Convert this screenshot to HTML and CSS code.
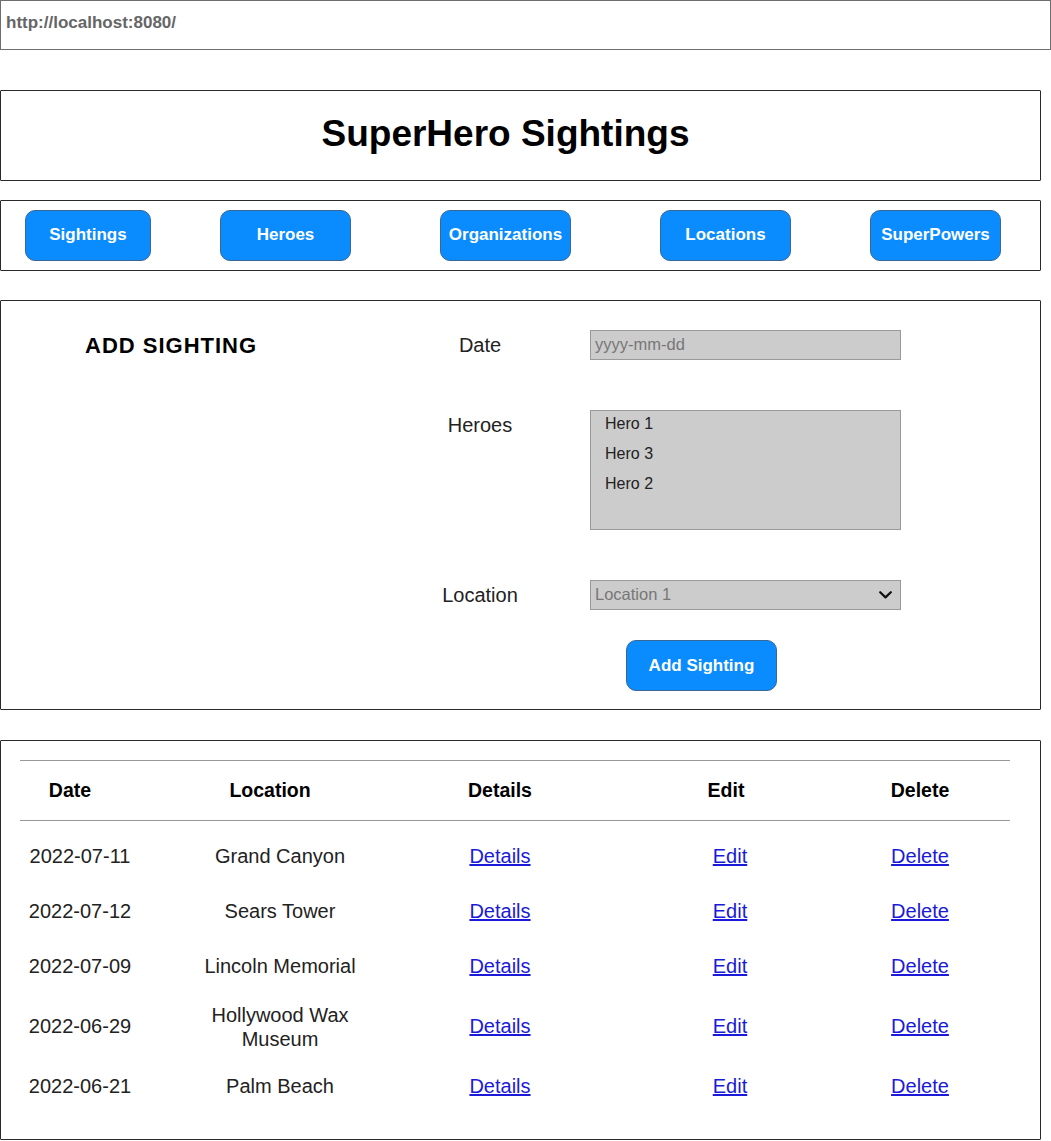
FILE: index.html
```html
<!DOCTYPE html>
<html lang="en">
<head>
<meta charset="utf-8">
<title>SuperHero Sightings</title>
<link rel="stylesheet" href="styles.css">
</head>
<body>
<div class="urlbar">http://localhost:8080/</div>

<header class="box header-box">
  <h1 class="title">SuperHero Sightings</h1>
</header>

<nav class="box nav-box">
  <a class="btn nav-btn nb-sightings">Sightings</a>
  <a class="btn nav-btn nb-heroes">Heroes</a>
  <a class="btn nav-btn nb-orgs">Organizations</a>
  <a class="btn nav-btn nb-locs">Locations</a>
  <a class="btn nav-btn nb-powers">SuperPowers</a>
</nav>

<section class="box add-box">
  <h2 class="add-title">ADD SIGHTING</h2>
  <div class="form-col">
    <div class="form-grid">
      <label class="field-label">Date</label>
      <input class="date-input" type="text" placeholder="yyyy-mm-dd">

      <label class="field-label label-top">Heroes</label>
      <ul class="hero-list">
        <li>Hero 1</li>
        <li>Hero 3</li>
        <li>Hero 2</li>
      </ul>

      <label class="field-label">Location</label>
      <div class="select-box">
        <span>Location 1</span>
        <svg class="chevron" width="13" height="8" viewBox="0 0 13 8"><path d="M1.2 1.2 L6.5 6.4 L11.8 1.2" fill="none" stroke="#111" stroke-width="2.2" stroke-linecap="round" stroke-linejoin="round"/></svg>
      </div>
    </div>
    <a class="btn add-btn">Add Sighting</a>
  </div>
</section>

<section class="box table-box">
  <div class="trow thead">
    <div class="c1 h1c">Date</div>
    <div class="c2 h2c">Location</div>
    <div class="c3">Details</div>
    <div class="c4 h4c">Edit</div>
    <div class="c5">Delete</div>
  </div>
  <div class="tbody">
    <div class="trow">
      <div class="c1">2022-07-11</div>
      <div class="c2"><span class="loc">Grand Canyon</span></div>
      <div class="c3"><a class="link">Details</a></div>
      <div class="c4"><a class="link">Edit</a></div>
      <div class="c5"><a class="link">Delete</a></div>
    </div>
    <div class="trow">
      <div class="c1">2022-07-12</div>
      <div class="c2"><span class="loc">Sears Tower</span></div>
      <div class="c3"><a class="link">Details</a></div>
      <div class="c4"><a class="link">Edit</a></div>
      <div class="c5"><a class="link">Delete</a></div>
    </div>
    <div class="trow">
      <div class="c1">2022-07-09</div>
      <div class="c2"><span class="loc">Lincoln Memorial</span></div>
      <div class="c3"><a class="link">Details</a></div>
      <div class="c4"><a class="link">Edit</a></div>
      <div class="c5"><a class="link">Delete</a></div>
    </div>
    <div class="trow">
      <div class="c1">2022-06-29</div>
      <div class="c2 c2-multi"><span class="loc">Hollywood Wax Museum</span></div>
      <div class="c3"><a class="link">Details</a></div>
      <div class="c4"><a class="link">Edit</a></div>
      <div class="c5"><a class="link">Delete</a></div>
    </div>
    <div class="trow">
      <div class="c1">2022-06-21</div>
      <div class="c2"><span class="loc">Palm Beach</span></div>
      <div class="c3"><a class="link">Details</a></div>
      <div class="c4"><a class="link">Edit</a></div>
      <div class="c5"><a class="link">Delete</a></div>
    </div>
  </div>
</section>
</body>
</html>
```

FILE: styles.css
```css
* { box-sizing: border-box; }

body {
  margin: 0;
  width: 1051px;
  font-family: "Liberation Sans", Arial, sans-serif;
  color: #222;
  background: #fff;
}

.urlbar {
  height: 50px;
  border: 1px solid #6e6e6e;
  padding: 0 0 4px 5px;
  display: flex;
  align-items: center;
  font-size: 17px;
  font-weight: bold;
  color: #666;
}

.box {
  width: 1041px;
  border: 1px solid #2a2a2a;
  border-radius: 1px;
}

/* header */
.header-box {
  margin-top: 40px;
  height: 91px;
  display: flex;
  align-items: center;
  justify-content: center;
  padding: 0 30px 3px 0;
}
.title {
  margin: 0;
  font-size: 37px;
  font-weight: bold;
  color: #000;
}

/* buttons */
.btn {
  display: flex;
  align-items: center;
  justify-content: center;
  height: 51px;
  background: #0a8cff;
  border: 1px solid #3a6896;
  border-radius: 10px;
  color: #fff;
  font-size: 17px;
  font-weight: bold;
  text-decoration: none;
}

.nav-box {
  margin-top: 19px;
  height: 71px;
  display: flex;
  align-items: center;
  padding: 0 0 1px 24px;
}
.nav-btn { width: 131px; }
.nb-sightings { width: 126px; }
.nb-heroes { margin-left: 69px; }
.nb-orgs { margin-left: 89px; }
.nb-locs { margin-left: 89px; }
.nb-powers { margin-left: 79px; }

/* add sighting form */
.add-box {
  margin-top: 29px;
  display: flex;
  padding: 29px 0 18px 0;
}
.add-title {
  width: 419px;
  margin: 0;
  padding-left: 84px;
  font-size: 22px;
  letter-spacing: 1px;
  line-height: 31px;
  font-weight: bold;
  color: #000;
}
.form-col {
  display: flex;
  flex-direction: column;
  align-items: flex-start;
}
.form-grid {
  display: grid;
  grid-template-columns: 120px 311px;
  grid-template-rows: 30px 120px 30px;
  column-gap: 50px;
  row-gap: 50px;
}
.field-label {
  font-size: 20px;
  line-height: 31px;
  text-align: center;
  color: #222;
}
.label-top { align-self: start; }

.date-input {
  -webkit-appearance: none;
  appearance: none;
  width: 311px;
  height: 30px;
  margin: 0;
  border: 1px solid #999;
  border-radius: 0;
  background: #cccccc;
  padding: 0 0 1px 4px;
  font-family: "Liberation Sans", Arial, sans-serif;
  font-size: 16.5px;
  color: #222;
  outline: none;
}
.date-input::placeholder { color: #777; }

.hero-list {
  list-style: none;
  margin: 0;
  padding: 0 0 0 14px;
  height: 120px;
  border: 1px solid #999;
  background: #cccccc;
  font-size: 16px;
  line-height: 30px;
  color: #222;
}
.hero-list li:first-child { margin-top: -2px; }

.select-box {
  height: 30px;
  border: 1px solid #999;
  background: #cccccc;
  display: flex;
  align-items: center;
  justify-content: space-between;
  padding: 0 8px 1px 4px;
  font-size: 16.5px;
  color: #777;
}
.chevron { display: block; margin-top: 1px; }

.add-btn {
  margin-top: 30px;
  margin-left: 206px;
  width: 151px;
}

/* table */
.table-box {
  margin-top: 30px;
  padding: 19px 30px 25px 19px;
}
.trow {
  display: grid;
  grid-template-columns: 120px 280px 160px 300px 80px 1fr;
  align-items: center;
  text-align: center;
  min-height: 55px;
  font-size: 20px;
  color: #222;
}
.thead {
  height: 61px;
  min-height: 0;
  border-top: 1px solid #999;
  border-bottom: 1px solid #999;
  font-size: 19.5px;
  font-weight: bold;
  color: #000;
}
.h1c, .h2c { padding-right: 20px; }
.h4c { padding-right: 8px; }

.tbody { margin-top: 8px; }
.loc {
  display: inline-block;
  max-width: 180px;
}
.c2-multi {
  line-height: 24px;
  padding: 8.5px 0;
}
.link {
  color: #1a1ad8;
  text-decoration: underline;
  cursor: pointer;
}
```
